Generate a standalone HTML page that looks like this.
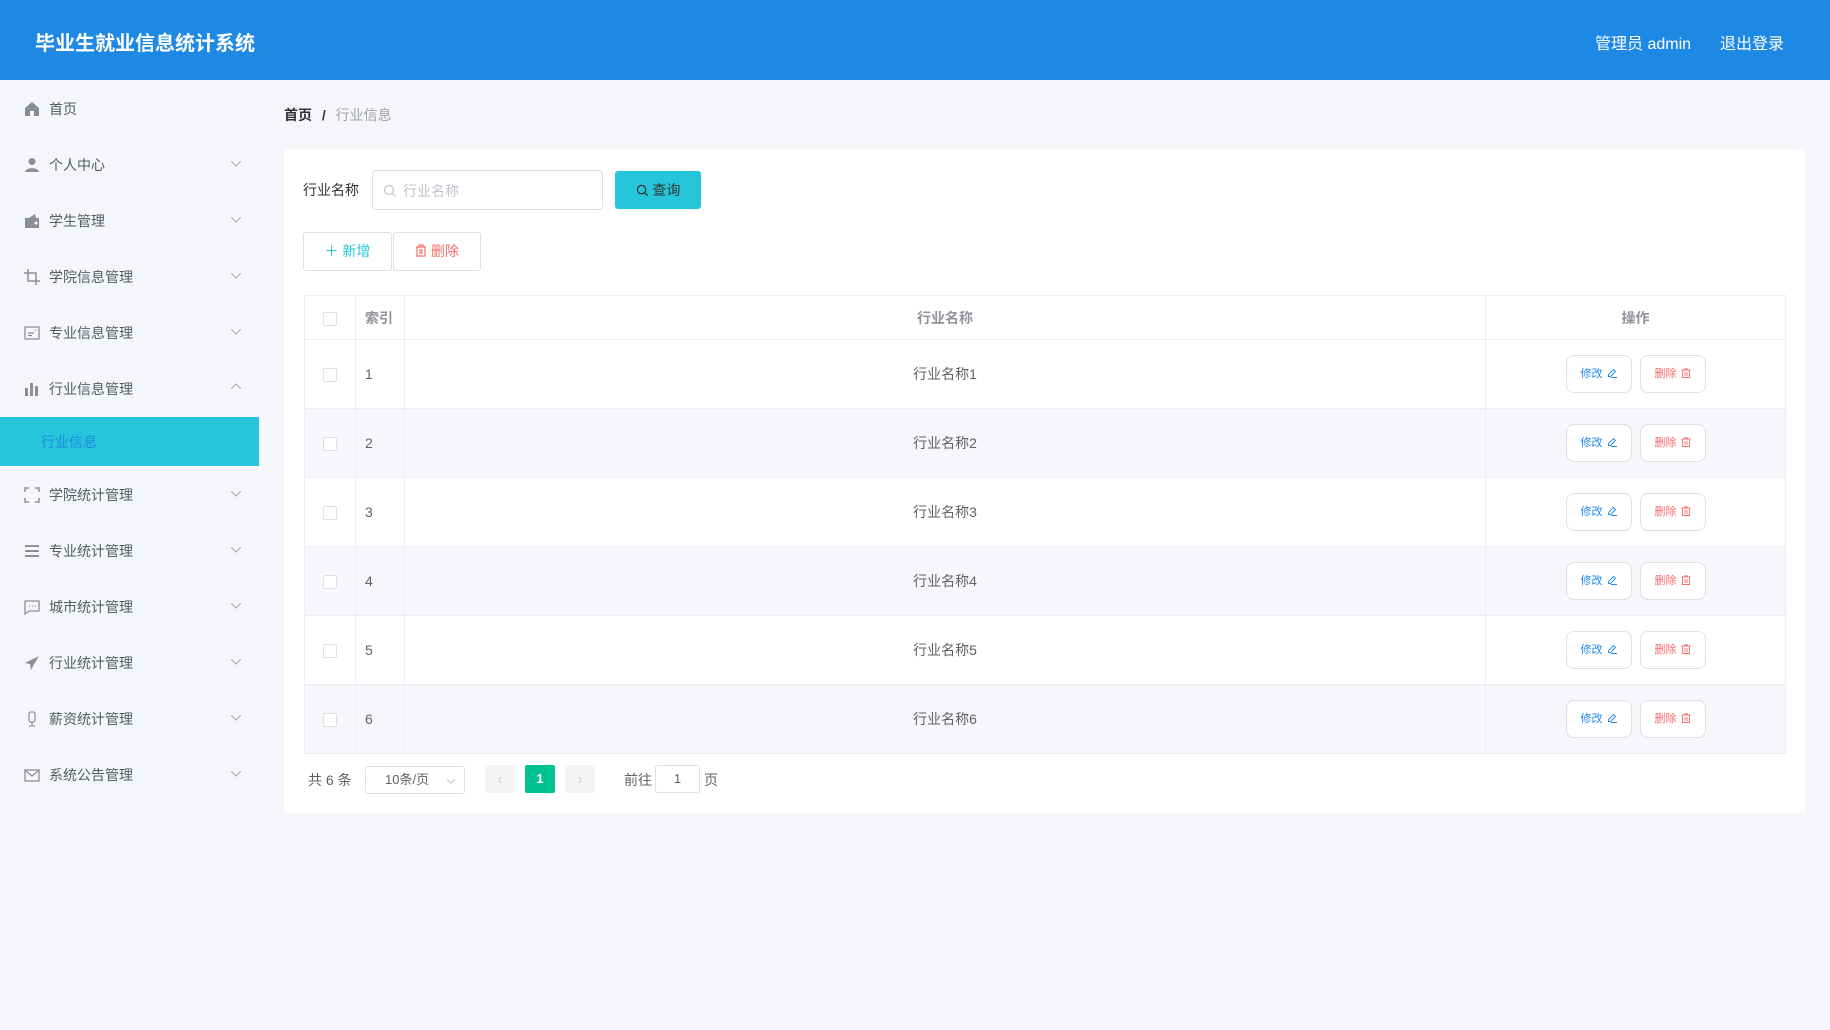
<!DOCTYPE html>
<html><head><meta charset="utf-8">
<style>
*{margin:0;padding:0;box-sizing:border-box}
body{width:1830px;height:1030px;background:#f4f6fa;font-family:"Liberation Sans","Noto Sans CJK SC",sans-serif;position:relative;overflow:hidden;color:#606266}
.hdr{position:absolute;left:0;top:0;width:1830px;height:80px;background:#1e88e5}
.hdr .t{position:absolute;left:35px;top:27px;font-size:20px;font-weight:bold;color:#fff}
.hdr .r{position:absolute;top:30px;font-size:16px;color:#fff}
.side{position:absolute;left:0;top:80px;width:259px;height:950px;background:#f4f6fa}
.mi{position:absolute;left:0;width:259px;height:20px;font-size:14px;color:#555a64}
.mi .ic{position:absolute;left:24px;top:2px;width:16px;height:16px}
.mi .tx{position:absolute;left:49px;top:0;line-height:20px}
.mi .ar{position:absolute;left:230px;top:2px;width:12px;height:12px}
.act{position:absolute;left:0;top:417px;width:259px;height:49px;background:#26c6da}
.act span{position:absolute;left:41px;top:15px;font-size:14px;color:#1e88e5}
.bc{position:absolute;left:284px;top:105px;font-size:14px}
.card{position:absolute;left:284px;top:149px;width:1521px;height:664px;background:#fff}
.abs{position:absolute}
table{border-collapse:collapse;position:absolute;left:304px;top:295px;width:1482px;font-size:14px}
td{border:1px solid #ebeef5;text-align:center;color:#606266}
tr.h td{height:44px;color:#909399;font-weight:bold;font-size:14px}
tr.b td{height:69px}
tr.b:nth-child(odd) td{background:#f5f7fa}
.cb{display:inline-block;width:14px;height:14px;border:1px solid #dcdfe6;border-radius:2px;background:#fff;vertical-align:middle}
.ob{display:inline-block;width:66px;height:38px;border:1px solid #dcdfe6;border-radius:8px;background:#fff;font-size:11px;line-height:36px;margin:0 4px;vertical-align:middle}
.ob svg{vertical-align:-1px;margin-left:4px}
</style></head><body>
<div class="hdr"><div class="t">毕业生就业信息统计系统</div>
<div class="r" style="left:1595px">管理员 admin</div><div class="r" style="left:1720px">退出登录</div></div>
<div class="side"></div>
<svg width="0" height="0" style="position:absolute"><defs>
<symbol id="dn" viewBox="0 0 12 12"><path d="M1 4l5 5 5-5" fill="none" stroke="#aaa" stroke-width="1"/></symbol>
<symbol id="pen" viewBox="0 0 10 10"><path d="M6.5 1.5l2 2-5 5H1.5v-2zM4 9.5h6" fill="none" stroke="#1e88e5" stroke-width="0.9"/></symbol>
<symbol id="bin" viewBox="0 0 10 10"><path d="M0.5 2h9M3.5 2V0.8h3V2M1.5 2v7.5h7V2M4 4v4M6 4v4" fill="none" stroke="#f56c6c" stroke-width="0.9"/></symbol>
</defs></svg>

<div class="mi" style="top:99px"><svg class="ic" viewBox="0 0 16 16"><path d="M8 1L1 7v8h5v-5h4v5h5V7z" fill="#8c8f96"/></svg><span class="tx">首页</span></div>
<div class="mi" style="top:155px"><svg class="ic" viewBox="0 0 16 16"><circle cx="8" cy="4.5" r="3.5" fill="#8c8f96"/><path d="M1 15c0-5 14-5 14 0z" fill="#8c8f96"/></svg><span class="tx">个人中心</span><svg class="ar"><use href="#dn"/></svg></div>
<div class="mi" style="top:211px"><svg class="ic" viewBox="0 0 16 16"><rect x="1" y="5" width="14" height="10" fill="#8c8f96"/><path d="M5 5l6-4 1 4" fill="#8c8f96"/><circle cx="12" cy="10" r="1.5" fill="#fff"/></svg><span class="tx">学生管理</span><svg class="ar"><use href="#dn"/></svg></div>
<div class="mi" style="top:267px"><svg class="ic" viewBox="0 0 16 16"><path d="M4 0v12h12M0 4h12v12" fill="none" stroke="#8c8f96" stroke-width="1.5"/></svg><span class="tx">学院信息管理</span><svg class="ar"><use href="#dn"/></svg></div>
<div class="mi" style="top:323px"><svg class="ic" viewBox="0 0 16 16"><rect x="1" y="2" width="14" height="12" fill="none" stroke="#8c8f96" stroke-width="1.3"/><path d="M4 8h6M4 10.5h4M11 5.5h1" stroke="#8c8f96" stroke-width="1.3"/></svg><span class="tx">专业信息管理</span><svg class="ar"><use href="#dn"/></svg></div>
<div class="mi" style="top:379px"><svg class="ic" viewBox="0 0 16 16"><path d="M1 7h3v8H1zM6 2h3v13H6zM11 5h3v10h-3z" fill="#8c8f96"/></svg><span class="tx">行业信息管理</span><svg class="ar"><path d="M1 8l5-5 5 5" fill="none" stroke="#aaa"/></svg></div>
<div class="act"><span>行业信息</span></div>
<div class="mi" style="top:485px"><svg class="ic" viewBox="0 0 16 16"><path d="M1 5V1h4M11 1h4v4M15 11v4h-4M5 15H1v-4" fill="none" stroke="#8c8f96" stroke-width="1.5"/></svg><span class="tx">学院统计管理</span><svg class="ar"><use href="#dn"/></svg></div>
<div class="mi" style="top:541px"><svg class="ic" viewBox="0 0 16 16"><path d="M1 3h14M1 8h14M1 13h14" stroke="#8c8f96" stroke-width="2"/></svg><span class="tx">专业统计管理</span><svg class="ar"><use href="#dn"/></svg></div>
<div class="mi" style="top:597px"><svg class="ic" viewBox="0 0 16 16"><path d="M1 2h14v10H5l-4 3z" fill="none" stroke="#8c8f96" stroke-width="1.3"/><path d="M5 7h1M8 7h1M11 7h1" stroke="#8c8f96" stroke-width="1.3"/></svg><span class="tx">城市统计管理</span><svg class="ar"><use href="#dn"/></svg></div>
<div class="mi" style="top:653px"><svg class="ic" viewBox="0 0 16 16"><path d="M15 1L1 8l5 1 1 6 2-4z" fill="#8c8f96"/></svg><span class="tx">行业统计管理</span><svg class="ar"><use href="#dn"/></svg></div>
<div class="mi" style="top:709px"><svg class="ic" viewBox="0 0 16 16"><rect x="5" y="1" width="6" height="10" rx="2" fill="none" stroke="#8c8f96" stroke-width="1.3"/><path d="M8 11v3M5 15h6" stroke="#8c8f96" stroke-width="1.3"/></svg><span class="tx">薪资统计管理</span><svg class="ar"><use href="#dn"/></svg></div>
<div class="mi" style="top:765px"><svg class="ic" viewBox="0 0 16 16"><rect x="1" y="3" width="14" height="11" fill="none" stroke="#8c8f96" stroke-width="1.3"/><path d="M1 3l7 6 7-6" fill="none" stroke="#8c8f96" stroke-width="1.3"/></svg><span class="tx">系统公告管理</span><svg class="ar"><use href="#dn"/></svg></div>

<div class="bc"><b style="color:#303133">首页</b> <b style="color:#303133;margin:0 6px">/</b> <span style="color:#a0a3a8">行业信息</span></div>
<div class="card"></div>

<div class="abs" style="left:303px;top:180px;font-size:14px;color:#303133">行业名称</div>
<div class="abs" style="left:372px;top:170px;width:231px;height:40px;border:1px solid #dcdfe6;border-radius:4px;background:#fff">
<svg style="position:absolute;left:10px;top:13px" width="14" height="14" viewBox="0 0 14 14"><circle cx="6" cy="6" r="4.5" fill="none" stroke="#c0c4cc" stroke-width="1.2"/><path d="M9.5 9.5l3 3" stroke="#c0c4cc" stroke-width="1.2"/></svg>
<span style="position:absolute;left:30px;top:10px;font-size:14px;color:#c0c4cc">行业名称</span></div>
<div class="abs" style="left:615px;top:171px;width:86px;height:38px;background:#26c6da;border-radius:3px;font-size:14px;color:#303133;text-align:center;line-height:38px">
<svg width="13" height="13" viewBox="0 0 14 14" style="vertical-align:-2px"><circle cx="6" cy="6" r="4.5" fill="none" stroke="#303133" stroke-width="1.4"/><path d="M9.5 9.5l3 3" stroke="#303133" stroke-width="1.4"/></svg> 查询</div>

<div class="abs" style="left:303px;top:232px;width:89px;height:39px;border:1px solid #dcdfe6;border-radius:3px;background:#fff;font-size:14px;color:#26c6da;text-align:center;line-height:37px">＋ 新增</div>
<div class="abs" style="left:393px;top:232px;width:88px;height:39px;border:1px solid #dcdfe6;border-radius:3px;background:#fff;font-size:14px;color:#f56c6c;text-align:center;line-height:37px">
<svg width="12" height="13" viewBox="0 0 12 13" style="vertical-align:-1px"><path d="M1 3h10M4 3V1h4v2M2 3v9h8V3M5 5v5M7 5v5" fill="none" stroke="#f56c6c" stroke-width="1.2"/></svg> 删除</div>

<table>
<tr class="h"><td style="width:51px"><span class="cb"></span></td><td style="width:49px;text-align:left;padding-left:9px">索引</td><td style="width:1081px">行业名称</td><td>操作</td></tr>
<tr class="b"><td><span class="cb"></span></td><td style="text-align:left;padding-left:9px">1</td><td>行业名称1</td><td><span class="ob" style="color:#1e88e5">修改<svg width="10" height="10"><use href="#pen"/></svg></span><span class="ob" style="color:#f56c6c">删除<svg width="10" height="10"><use href="#bin"/></svg></span></td></tr>
<tr class="b"><td><span class="cb"></span></td><td style="text-align:left;padding-left:9px">2</td><td>行业名称2</td><td><span class="ob" style="color:#1e88e5">修改<svg width="10" height="10"><use href="#pen"/></svg></span><span class="ob" style="color:#f56c6c">删除<svg width="10" height="10"><use href="#bin"/></svg></span></td></tr>
<tr class="b"><td><span class="cb"></span></td><td style="text-align:left;padding-left:9px">3</td><td>行业名称3</td><td><span class="ob" style="color:#1e88e5">修改<svg width="10" height="10"><use href="#pen"/></svg></span><span class="ob" style="color:#f56c6c">删除<svg width="10" height="10"><use href="#bin"/></svg></span></td></tr>
<tr class="b"><td><span class="cb"></span></td><td style="text-align:left;padding-left:9px">4</td><td>行业名称4</td><td><span class="ob" style="color:#1e88e5">修改<svg width="10" height="10"><use href="#pen"/></svg></span><span class="ob" style="color:#f56c6c">删除<svg width="10" height="10"><use href="#bin"/></svg></span></td></tr>
<tr class="b"><td><span class="cb"></span></td><td style="text-align:left;padding-left:9px">5</td><td>行业名称5</td><td><span class="ob" style="color:#1e88e5">修改<svg width="10" height="10"><use href="#pen"/></svg></span><span class="ob" style="color:#f56c6c">删除<svg width="10" height="10"><use href="#bin"/></svg></span></td></tr>
<tr class="b"><td><span class="cb"></span></td><td style="text-align:left;padding-left:9px">6</td><td>行业名称6</td><td><span class="ob" style="color:#1e88e5">修改<svg width="10" height="10"><use href="#pen"/></svg></span><span class="ob" style="color:#f56c6c">删除<svg width="10" height="10"><use href="#bin"/></svg></span></td></tr>
</table>

<div class="abs" style="left:308px;top:770px;font-size:14px">共 6 条</div>
<div class="abs" style="left:365px;top:766px;width:100px;height:28px;border:1px solid #dcdfe6;border-radius:3px;font-size:13px;line-height:26px;padding-left:19px">10条/页<svg style="position:absolute;right:8px;top:9px" width="10" height="10"><path d="M1 3l4 4 4-4" fill="none" stroke="#c0c4cc"/></svg></div>
<div class="abs" style="left:485px;top:765px;width:30px;height:28px;background:#f4f4f5;border-radius:2px;color:#c0c4cc;text-align:center;line-height:28px;font-size:14px">‹</div>
<div class="abs" style="left:525px;top:765px;width:30px;height:28px;background:#00c292;border-radius:2px;color:#fff;text-align:center;line-height:28px;font-size:13px;font-weight:bold">1</div>
<div class="abs" style="left:565px;top:765px;width:30px;height:28px;background:#f4f4f5;border-radius:2px;color:#c0c4cc;text-align:center;line-height:28px;font-size:14px">›</div>
<div class="abs" style="left:624px;top:770px;font-size:14px">前往</div>
<div class="abs" style="left:655px;top:765px;width:45px;height:28px;border:1px solid #dcdfe6;border-radius:3px;text-align:center;line-height:26px;font-size:13px">1</div>
<div class="abs" style="left:704px;top:770px;font-size:14px">页</div>
</body></html>
